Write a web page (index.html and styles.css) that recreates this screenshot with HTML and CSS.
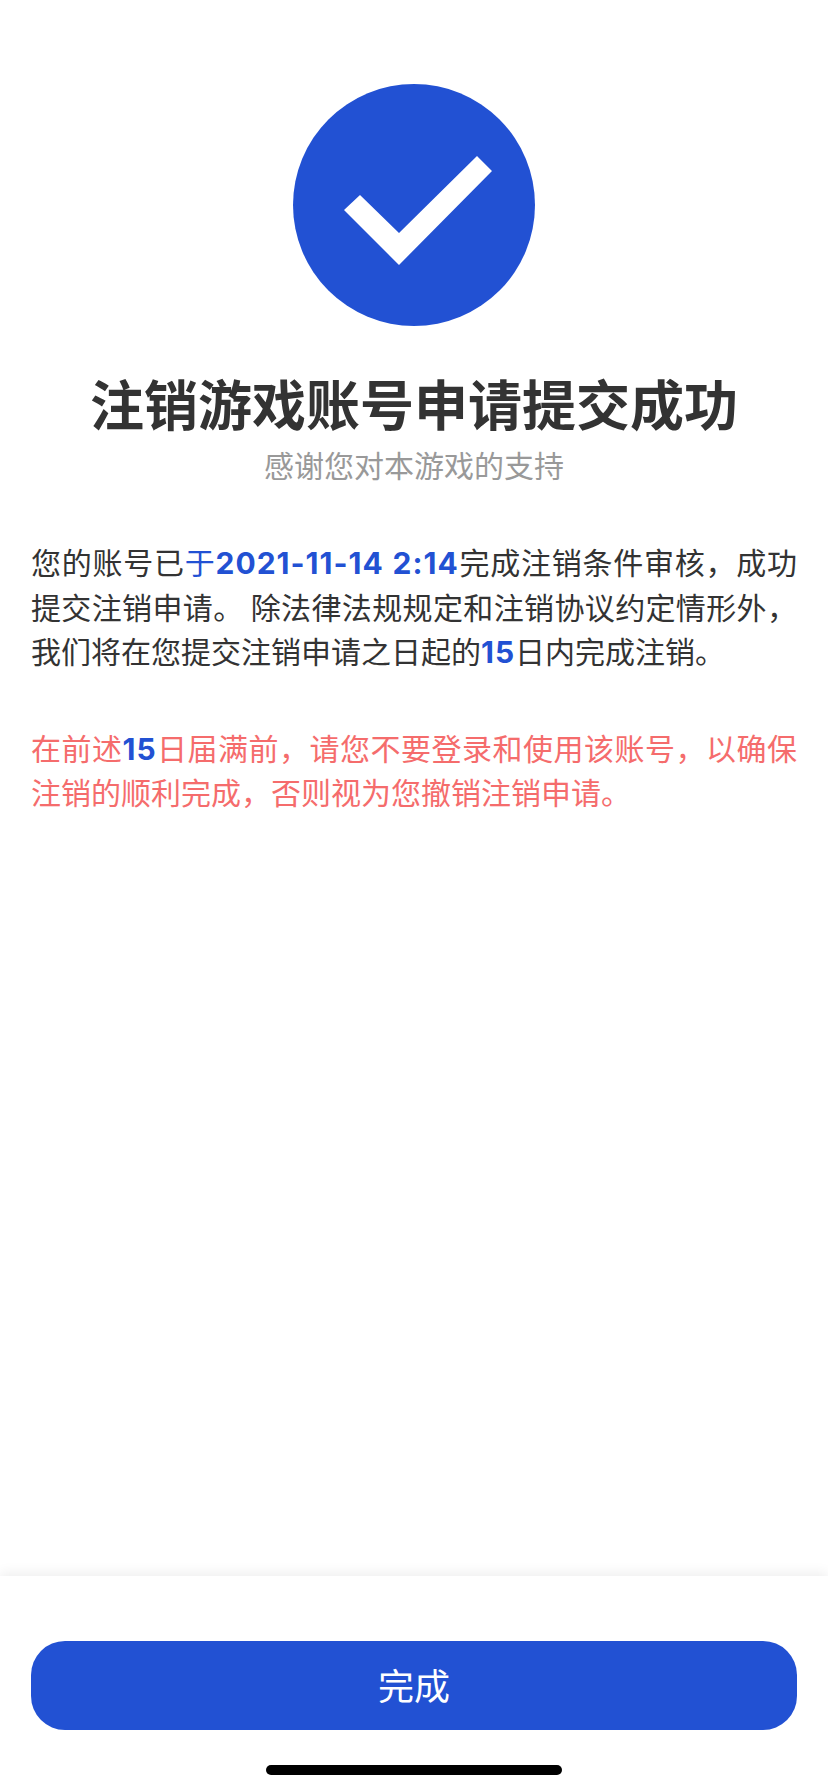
FILE: index.html
```html
<!DOCTYPE html>
<html lang="zh-CN">
<head>
    <meta charset="UTF-8">
    <meta name="viewport" content="width=device-width, initial-scale=1.0">
    <title>注销游戏账号</title>
    <link rel="stylesheet" href="styles.css">
</head>
<body>
    <div class="page">
        <main class="content">
            <svg class="success-icon" viewBox="0 0 242 242" aria-hidden="true">
                <circle cx="121" cy="121" r="121" fill="#2251d3"></circle>
                <polygon points="51,126 67,111 106,149 184,72 199,87 106,181" fill="#fff"></polygon>
            </svg>
            <h1 class="title">注销游戏账号申请提交成功</h1>
            <p class="subtitle">感谢您对本游戏的支持</p>
            <p class="notice">您的账号已<span class="blue">于</span><b class="blue">2021-11-14 2:14</b>完成注销条件审核，成功提交注销申请。 除法律法规规定和注销协议约定情形外，我们将在您提交注销申请之日起的<b class="blue">15</b>日内完成注销。</p>
            <p class="notice warning">在前述<b class="blue">15</b>日届满前，请您不要登录和使用该账号，以确保注销的顺利完成，否则视为您撤销注销申请。</p>
        </main>
        <footer class="footer">
            <button class="done">完成</button>
            <div class="home-bar"></div>
        </footer>
    </div>
</body>
</html>
```

FILE: styles.css
```css
* {
    margin: 0;
    padding: 0;
    box-sizing: border-box;
}

body {
    background: #fff;
    font-family: "Noto Sans CJK SC", "Noto Sans", sans-serif;
    color: #333;
}

.page {
    display: flex;
    flex-direction: column;
    height: 1792px;
}

.content {
    flex: 1;
    padding: 84px 31px 0;
}

.success-icon {
    display: block;
    width: 242px;
    height: 242px;
    margin: 0 auto;
}

.title {
    margin-top: 39px;
    font-size: 54px;
    line-height: 76px;
    font-weight: 700;
    text-align: center;
    white-space: nowrap;
}

.subtitle {
    margin-top: 1px;
    font-size: 30px;
    line-height: 44px;
    color: #999;
    text-align: center;
}

.notice {
    margin-top: 53px;
    font-size: 30px;
    line-height: 44.5px;
    text-align: justify;
}

.warning {
    margin-top: 52px;
    color: #f56c6c;
}

.blue {
    color: #2251d3;
}

.notice b {
    font-family: "Inter", sans-serif;
    font-weight: 700;
    letter-spacing: 1px;
    line-height: 1;
}

.footer {
    position: relative;
    height: 216px;
    padding: 65px 31px 0;
    background: #fff;
    box-shadow: 0 -3px 12px rgba(0, 0, 0, 0.07);
}

.done {
    display: block;
    width: 100%;
    height: 89px;
    padding-bottom: 4px;
    border: none;
    border-radius: 34px;
    background: #2251d3;
    color: #fff;
    font-family: inherit;
    font-size: 36px;
}

.home-bar {
    position: absolute;
    left: 266px;
    bottom: 17px;
    width: 296px;
    height: 10px;
    border-radius: 5px;
    background: #000;
}
```
